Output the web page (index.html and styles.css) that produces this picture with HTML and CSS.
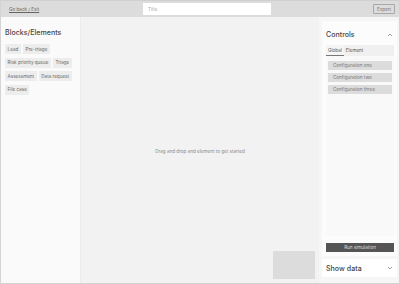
FILE: index.html
```html
<!DOCTYPE html>
<html>
<head>
<meta charset="utf-8">
<link rel="stylesheet" href="styles.css">
</head>
<body>
<div class="app">
  <header class="topbar">
    <a class="back">Go back / Exit</a>
    <div class="title-input">Title</div>
    <button class="export">Export</button>
  </header>
  <div class="main">
    <aside class="left">
      <h2 class="heading">Blocks/Elements</h2>
      <div class="chips">
        <span class="chip">Lead</span>
        <span class="chip">Pre-triage</span>
        <span class="chip">Risk priority queue</span>
        <span class="chip">Triage</span>
        <span class="chip">Assessment</span>
        <span class="chip">Data request</span>
        <span class="chip">File case</span>
      </div>
    </aside>
    <section class="canvas">
      <p class="hint">Drag and drop and element to get started</p>
      <div class="minimap"></div>
    </section>
    <aside class="right">
      <div class="card controls">
        <div class="card-head">
          <h2 class="heading">Controls</h2>
          <svg class="chev" width="6" height="4" viewBox="0 0 6 4"><path d="M1 3 L3 1 L5 3" fill="none" stroke="#888" stroke-width="0.8"/></svg>
        </div>
        <div class="panel">
          <div class="tabs">
            <span class="tab active">Global</span>
            <span class="tab">Element</span>
          </div>
          <div class="configs">
            <div class="config">Configuration one</div>
            <div class="config">Configuration two</div>
            <div class="config">Configuration three</div>
          </div>
        </div>
        <button class="run">Run simulation</button>
      </div>
      <div class="card showdata">
        <h2 class="heading">Show data</h2>
        <svg class="chev" width="6" height="4" viewBox="0 0 6 4"><path d="M1 1 L3 3 L5 1" fill="none" stroke="#888" stroke-width="0.8"/></svg>
      </div>
    </aside>
  </div>
</div>
</body>
</html>
```
FILE: styles.css
```css
* { box-sizing: border-box; margin: 0; padding: 0; }
html, body { width: 400px; height: 284px; overflow: hidden; }
body { font-family: Inter, "Noto Sans", sans-serif; color: #333; background: #fff; }
.app {
  width: 400px; height: 284px;
  border: 1px solid #d4d4d4;
  border-top: 0;
  display: flex; flex-direction: column;
}
.topbar {
  height: 17px; flex: none;
  background: #dcdcdc;
  border-top: 1px solid #d0d0d0;
  display: flex; align-items: center;
  padding: 0 4px 0 8px;
}
.back {
  font-size: 4.6px; color: #666; text-decoration: underline;
  width: 134px;
}
.title-input {
  width: 128px; height: 12px;
  background: #fff;
  font-size: 4.6px; color: #aaa;
  display: flex; align-items: center; padding-left: 5px;
}
.export {
  margin-left: auto;
  width: 22px; height: 10px;
  border: 1px solid #a8a8a8;
  border-radius: 1px;
  background: #dcdcdc;
  font-family: inherit; font-size: 4.6px; color: #777;
}
.main { flex: 1; display: flex; min-height: 0; }
.left {
  width: 80px; flex: none;
  background: #fafafa;
  border-right: 1px solid #ececec;
  padding: 11px 4px 0 4px;
}
.heading { font-size: 7px; font-weight: 500; color: #444; letter-spacing: 0.05px; }
.chips {
  margin-top: 7px;
  display: flex; flex-wrap: wrap; gap: 3.5px 2px;
}
.chip {
  height: 10px;
  background: #ededed;
  font-size: 4.6px; color: #666;
  display: flex; align-items: center; padding: 0 2.6px;
}
.canvas {
  flex: 1;
  background: #f2f2f2;
  position: relative;
  display: flex; align-items: center; justify-content: center;
}
.hint { font-size: 4.6px; color: #888; margin-top: 2px; }
.minimap {
  position: absolute; right: 4px; bottom: 4px;
  width: 42px; height: 28px;
  background: #dcdcdc;
}
.right {
  width: 80px; flex: none;
  background: #f6f6f6;
  padding: 4px 2px 6px 3px;
  display: flex; flex-direction: column; gap: 3px;
}
.card { background: #fcfcfc; }
.controls {
  flex: 1;
  padding: 9px 3px 4px 4px;
  display: flex; flex-direction: column;
}
.card-head { display: flex; align-items: center; justify-content: space-between; padding-right: 1px; }
.panel {
  margin-top: 6px;
  flex: 1;
  background: #f9f9f9;
}
.tabs { display: flex; background: #f0f0f0; height: 11px; }
.tab {
  font-size: 4.6px; color: #555;
  display: flex; align-items: center;
  padding: 0 2px;
}
.tab.active { border-bottom: 0.8px solid #777; background: #f5f5f5; }
.configs { padding: 5px 2px; display: flex; flex-direction: column; gap: 3px; }
.config {
  height: 9px;
  background: #dcdcdc;
  font-size: 4.6px; color: #777;
  display: flex; align-items: center; padding-left: 5px;
}
.run {
  margin-top: 7px;
  height: 9px;
  background: #555;
  border: 0;
  font-family: inherit; font-size: 4.6px; color: #ddd;
}
.showdata {
  height: 18px; flex: none;
  display: flex; align-items: center; justify-content: space-between;
  padding: 0 4px 0 4px;
  background: #fff;
}
.chev { flex: none; }
```
